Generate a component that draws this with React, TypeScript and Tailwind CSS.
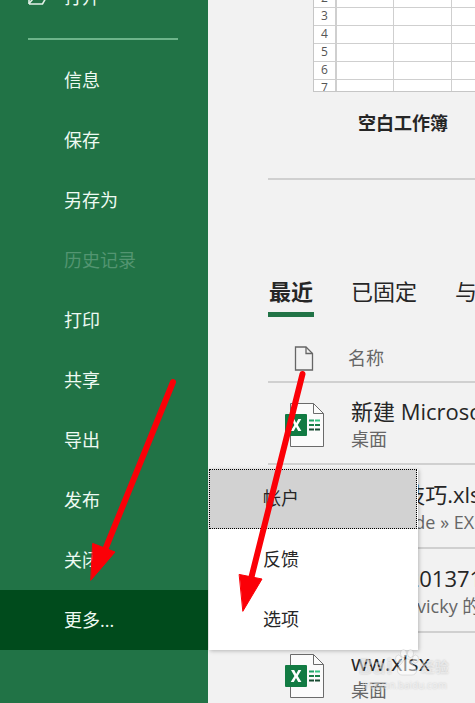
interface RecentFile {
  id: string
  title: string
  location: string
}

const MENU_ITEMS = [
  { label: '信息' },
  { label: '保存' },
  { label: '另存为' },
  { label: '历史记录', disabled: true },
  { label: '打印' },
  { label: '共享' },
  { label: '导出' },
  { label: '发布' },
  { label: '关闭' },
]

const RECENT_FILES: RecentFile[] = [
  { id: 'new', title: '新建 Microsoft Excel 工作表.xlsx', location: '桌面' },
  { id: 'tips', title: 'Excel技巧.xlsx', location: 'D: » Trade » EXCEL' },
  { id: 'numbers', title: 'Note 201371.xlsx', location: 'Users » vicky 的文件' },
  { id: 'ww', title: 'ww.xlsx', location: '桌面' },
]

const SHEET_ROWS = [1, 2, 3, 4, 5, 6, 7]

function FolderIcon() {
  return (
    <svg width="20" height="16" viewBox="0 0 20 16" fill="none" stroke="#e3f1e8" strokeWidth="1.6">
      <path d="M1 15V1h6l2 3h7v3" />
      <path d="M1 15h13.500l4.500-8H7.500L1 14.500" />
    </svg>
  )
}

function PageIcon() {
  return (
    <svg width="20" height="25" viewBox="0 0 20 25" fill="none" stroke="#666" strokeWidth="1.3">
      <path d="M1.500 1h10.500l6.500 6.500V24H1.500z" />
      <path d="M12 1v6.500h6.500" />
    </svg>
  )
}

function ExcelFileIcon() {
  return (
    <svg width="40" height="44" viewBox="0 0 40 44" className="shrink-0">
      <path d="M5.500.5H28.500l10 10V43.500H5.500z" fill="#fbfbfb" stroke="#6b6b6b" />
      <path d="M28.500.5v10h10" fill="none" stroke="#6b6b6b" />
      <rect x="0" y="11" width="22" height="22" rx="1" fill="#127b43" />
      <path
        d="M6 16h3.200l2 4 2.100-4h3l-3.500 6 3.600 6h-3.200l-2.200-4.100L8.800 28H5.700l3.700-6z"
        fill="#fff"
      />
      <path d="M24 17.500h5" stroke="#21a366" strokeWidth="2" />
      <path d="M30 17.500h5" stroke="#33c481" strokeWidth="2" />
      <path d="M24 22h5M30 22h5" stroke="#188048" strokeWidth="2" />
      <path d="M24 26.500h5M30 26.500h5" stroke="#174a30" strokeWidth="2" />
    </svg>
  )
}

/** Backstage navigation on the left with the "more" flyout */
function Sidebar() {
  return (
    <nav className="relative z-10 w-52 shrink-0 bg-[#217346] text-lg text-[#eefaf2]">
      <button className="-mt-[33px] flex h-[60px] w-full items-center gap-4 pl-7 text-left">
        <FolderIcon />
        打开
      </button>
      <hr className="mx-7 mt-[11px] mb-2.5 w-[150px] border-t-2 border-[#6db48a]" />
      {MENU_ITEMS.map((item) => (
        <button
          key={item.label}
          disabled={item.disabled}
          className="block h-[60px] w-full pl-16 text-left disabled:text-[#539571]"
        >
          {item.label}
        </button>
      ))}
      <div className="relative">
        <button className="block h-[60px] w-full bg-[#004b1c] pl-16 text-left">更多...</button>
        <div className="absolute bottom-0 left-full ml-px w-[209px] bg-white pb-px text-[#262626] shadow-[1px_1px_4px_rgba(0,0,0,0.25)]">
          <button className="block h-[60px] w-[208px] border border-dotted border-black bg-[#d2d2d2] pb-0.5 pl-[53px] text-left">
            帐户
          </button>
          <button className="block h-[60px] w-full pl-[54px] text-left">反馈</button>
          <button className="block h-[60px] w-full pl-[54px] text-left">选项</button>
        </div>
      </div>
    </nav>
  )
}

function BlankWorkbook() {
  return (
    <button className="-mt-[30px] ml-[45px] block w-[180px]">
      <span className="block h-[122px] overflow-hidden border border-[#c6c6c6] bg-white">
        {SHEET_ROWS.map((row) => (
          <span key={row} className="grid h-[18px] grid-cols-[23px_57px_58px_1fr] text-xs leading-[18px] text-[#555]">
            <span className="border-r-2 border-b border-[#cfcfcf]">{row}</span>
            <span className="border-r border-b border-[#cfcfcf]" />
            <span className="border-r border-b border-[#cfcfcf]" />
            <span className="border-b border-[#cfcfcf]" />
          </span>
        ))}
      </span>
      <span className="mt-[17px] block text-lg font-bold text-[#262626]">空白工作簿</span>
    </button>
  )
}

function RecentRow({ file }: { file: RecentFile }) {
  return (
    <li className="h-[84px] border-b-2 border-[#d0d0d0] first:h-[82px]">
      <a href={`#${file.id}`} className="flex h-full items-center gap-[26px] pt-1 pl-[17px] whitespace-nowrap">
        <ExcelFileIcon />
        <span>
          <span className="block text-[22px] leading-7 text-[#262626]">{file.title}</span>
          <span className="block text-lg leading-7 text-[#666]">{file.location}</span>
        </span>
      </a>
    </li>
  )
}

/** Red hand-drawn pointers to the menu entries */
function Arrows() {
  return (
    <svg
      width="320"
      height="620"
      viewBox="0 0 320 620"
      className="pointer-events-none absolute top-0 left-0 z-20"
      fill="#fb0007"
      stroke="#fb0007"
      strokeLinecap="round"
    >
      <path d="M173 382L105 550M302.500 374L251 579" strokeWidth="6" />
      <path d="M93 543.500l22 8.500-24 28zM239.500 574.500l22.500 4.500-19 32z" strokeWidth="1" />
    </svg>
  )
}

function PawIcon() {
  return (
    <svg width="24" height="28" viewBox="0 0 24 28" fill="currentColor" stroke="#00000018">
      <ellipse cx="3.500" cy="10" rx="3" ry="4" />
      <ellipse cx="8.500" cy="4.500" rx="3" ry="4" />
      <ellipse cx="15.500" cy="4.500" rx="3" ry="4" />
      <ellipse cx="20.500" cy="10" rx="3" ry="4" />
      <path d="M12 10c4 0 4 4 7 6 4 3 3 10-2 10H7c-5 0-6-7-2-10 3-2 3-6 7-6z" />
    </svg>
  )
}

function Watermark() {
  return (
    <div className="pointer-events-none absolute top-[649px] left-[358px] z-20 text-white/50 [text-shadow:0_0_2px_rgba(0,0,0,0.2)]">
      <div className="flex items-end gap-0.5 leading-6 font-bold">
        <span className="text-[22px]">Bai</span>
        <PawIcon />
        <span className="text-sm">经验</span>
      </div>
      <div className="pl-1 text-[10px] leading-4">jingyan.baidu.com</div>
    </div>
  )
}

export default function App() {
  return (
    <div className="relative flex h-screen overflow-hidden bg-[#f2f2f2] font-['Open_Sans','Noto_Sans_CJK_SC',sans-serif]">
      <Sidebar />
      <main className="min-w-0 flex-1 overflow-hidden pl-[60px]">
        <BlankWorkbook />
        <hr className="mt-[41px] border-t-2 border-[#d0d0d0]" />
        <div className="mt-[91px] flex gap-9 text-[22px] leading-10 whitespace-nowrap text-[#262626]">
          <button className="border-b-[5px] border-[#217346] px-px pb-px font-bold">最近</button>
          <button className="border-b-[5px] border-transparent px-px pb-px">已固定</button>
          <button className="border-b-[5px] border-transparent px-px pb-px">与我共享</button>
        </div>
        <div className="flex h-[66px] items-center gap-[34px] border-b-2 border-[#d0d0d0] pt-[18px] pl-[26px] text-lg text-[#666]">
          <PageIcon />
          名称
        </div>
        <ul>
          {RECENT_FILES.map((file) => (
            <RecentRow key={file.id} file={file} />
          ))}
        </ul>
      </main>
      <Arrows />
      <Watermark />
    </div>
  )
}
